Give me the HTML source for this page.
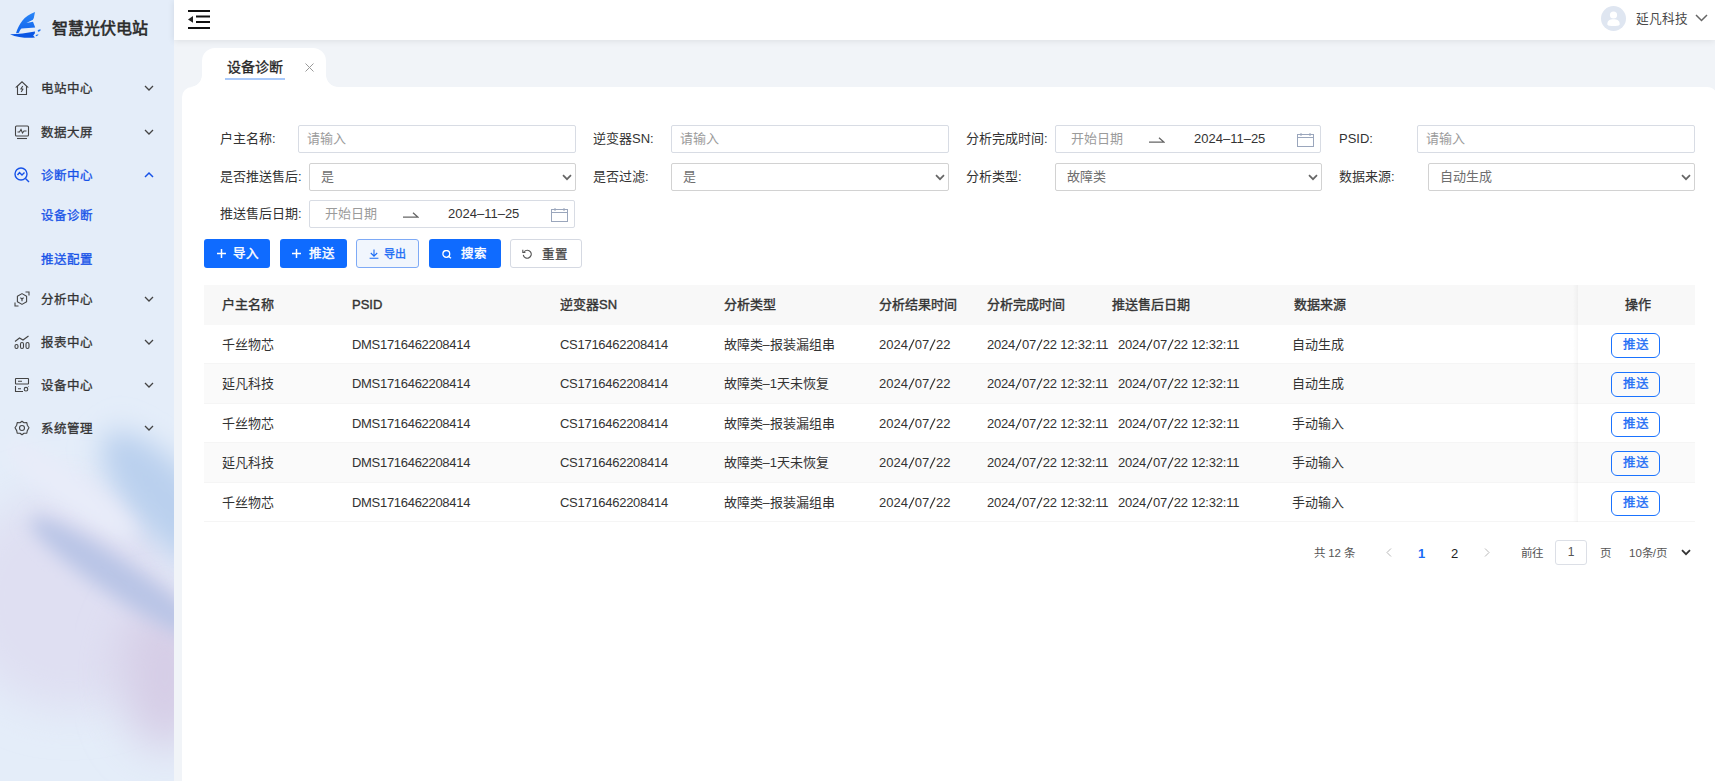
<!DOCTYPE html>
<html lang="zh-CN"><head><meta charset="utf-8">
<style>
*{box-sizing:border-box;margin:0;padding:0}
html,body{width:1715px;height:781px;overflow:hidden;background:#fff;font-family:"Liberation Sans",sans-serif;color:#333}
#side{position:absolute;left:0;top:0;width:174px;height:781px;overflow:hidden;background:#e4edf9}
#side .b{position:absolute;border-radius:50%}
.logo-t{position:absolute;left:52px;top:17.2px;font-size:16px;line-height:24px;font-weight:400;-webkit-text-stroke:0.6px currentColor;color:#2b2b2b;white-space:nowrap}
.mi{position:absolute;left:0;width:174px;height:20px;font-size:12.5px;font-weight:400;-webkit-text-stroke:0.3px currentColor;color:#333}
.mi svg.ic{position:absolute;left:14px;top:0.5px;width:16px;height:16px}
.mi .tx{position:absolute;left:41px;top:0;line-height:20px;white-space:nowrap}
.mi svg.ch{position:absolute;left:144px;top:4.5px;width:10px;height:8px}
.mi.blue{color:#1652e8}
#hdr{position:absolute;left:174px;top:0;width:1541px;height:40px;background:#fff;z-index:3;box-shadow:0 1px 7px rgba(0,0,0,0.09)}
#tabs{position:absolute;left:174px;top:40px;width:1541px;height:741px;background:#f1f4f8}
#card{position:absolute;left:182px;top:87px;width:1536px;height:694px;background:#fff;border-top-left-radius:10px;border-top-right-radius:11px}
.lbl{position:absolute;font-size:13px;color:#333;line-height:28px;white-space:nowrap}
.inp{position:absolute;height:28px;border:1px solid #d8dce4;border-radius:2px;background:#fff;font-size:13px;line-height:26px;color:#9b9b9b;white-space:nowrap}
.inp span{position:absolute;top:0}
.sel{border-color:#d2d2d2!important}
.sel svg{position:absolute;right:3px;top:10px;width:10px;height:7px}
.btn{position:absolute;top:239px;height:29px;border-radius:3px;font-size:12.5px;font-weight:400;-webkit-text-stroke:0.4px currentColor;line-height:29px;color:#fff;background:#0f6bff;white-space:nowrap}
.btn span,.btn svg{position:absolute}
.btn span{top:1.3px}
.th{position:absolute;top:285px;font-size:13px;font-weight:400;-webkit-text-stroke:0.38px currentColor;line-height:39px;color:#333;white-space:nowrap}
.row{position:absolute;left:204px;width:1491px;height:40px}
.td{position:absolute;font-size:13px;color:#333;line-height:40px;white-space:nowrap;top:0}
.op{position:absolute;left:1407px;top:8px;width:49px;height:25px;border:1px solid #1a73ff;border-radius:6px;color:#1a6cf5;font-size:12.5px;line-height:23px;text-align:center;-webkit-text-stroke:0.3px currentColor}
svg.sl{display:inline-block;vertical-align:-2px;margin:0 -0.1px}
.pg{position:absolute;top:543px;font-size:11.5px;line-height:20px;color:#555;white-space:nowrap}
</style></head><body>
<div id="side">
  <svg style="position:absolute;left:0;top:0" width="174" height="781" viewBox="0 0 174 781">
  <defs><filter id="bl" x="-50%" y="-50%" width="200%" height="200%"><feGaussianBlur stdDeviation="14"/></filter>
  <filter id="bl2" x="-50%" y="-50%" width="200%" height="200%"><feGaussianBlur stdDeviation="9"/></filter>
  <filter id="bl3" x="-50%" y="-50%" width="200%" height="200%"><feGaussianBlur stdDeviation="22"/></filter></defs>
  <ellipse cx="70" cy="600" rx="110" ry="110" fill="#dfdff2" filter="url(#bl3)"/>
  <ellipse cx="165" cy="675" rx="45" ry="75" fill="#d6cde6" filter="url(#bl3)"/>
  <ellipse cx="165" cy="500" rx="34" ry="88" transform="rotate(-42 165 500)" fill="#bad0ee" filter="url(#bl)"/>
  <ellipse cx="70" cy="490" rx="80" ry="18" transform="rotate(36 70 490)" fill="#e8ecf9" filter="url(#bl2)"/>
  <ellipse cx="118" cy="578" rx="105" ry="18" transform="rotate(34 118 578)" fill="#b9c5e6" filter="url(#bl2)"/>
</svg>
  <svg style="position:absolute;left:0;top:0" width="45" height="42" viewBox="0 0 45 42">
    <defs><linearGradient id="lg" x1="0" y1="0" x2="0" y2="1"><stop offset="0" stop-color="#2a86f7"/><stop offset="1" stop-color="#0f62ec"/></linearGradient></defs>
    <path d="M35 12 C29.5 14 25 17 22.5 20.5 C19.5 24.5 17.2 29 16 33.2 L19 32.8 C19.6 30.8 20.4 29.4 21.5 28.6 C26 27.9 31 27.6 35.2 27.4 L33 21.8 L26.4 22.9 L32.9 19.8 L33.8 18 C34.2 16 34.6 14 35 12 Z" fill="url(#lg)"/>
    <path d="M10 34.2 C18 34.2 27 33.3 35 31.6 L34.8 33.6 L33.2 35.4 L35 37.6 C27 38.2 17 37.6 10 34.2 Z" fill="#0a56e4"/>
    <path d="M37.6 30.8 C38.2 29.8 39.6 29.2 40.8 29.6 C40.8 30.6 39.6 31.6 38.2 31.8 Z M35.6 35.6 C36.2 34.8 37.4 34.4 38.6 34.6 C38.4 35.4 37.2 36 36 36.2 Z" fill="#1a6ff2"/>
  </svg>
  <div class="logo-t">智慧光伏电站</div>
  <div class="mi" style="top:79px">
    <svg class="ic" viewBox="0 0 16 16" fill="none" stroke="#444" stroke-width="1.1"><path d="M2.5 7 L8 1.8 L13.5 7 L12.5 7 L12.5 14.5 L3.5 14.5 L3.5 7 Z"/><path d="M8.8 6 L6.8 9 L9 9 L7.2 12" stroke-linejoin="round"/></svg>
    <span class="tx">电站中心</span>
    <svg class="ch" viewBox="0 0 10 8" fill="none" stroke="#444" stroke-width="1.3"><path d="M1 2 L5 6 L9 2"/></svg></div>
  <div class="mi" style="top:123px">
    <svg class="ic" viewBox="0 0 16 16" fill="none" stroke="#444" stroke-width="1.1"><rect x="1.5" y="2" width="13" height="10" rx="1"/><path d="M3.5 8 L5.5 8 L7 5.5 L8.5 9 L10 7 L12.5 7"/><path d="M3 14.5 L13 14.5"/></svg>
    <span class="tx">数据大屏</span>
    <svg class="ch" viewBox="0 0 10 8" fill="none" stroke="#444" stroke-width="1.3"><path d="M1 2 L5 6 L9 2"/></svg></div>
  <div class="mi blue" style="top:166px">
    <svg class="ic" viewBox="0 0 16 16" fill="none" stroke="#1652e8" stroke-width="1.4"><circle cx="7" cy="7" r="6"/><path d="M11.5 11.5 L15 15"/><path d="M3.5 8 L5.5 5.5 L8 8 L10.5 5.5"/></svg>
    <span class="tx">诊断中心</span>
    <svg class="ch" viewBox="0 0 10 8" fill="none" stroke="#1652e8" stroke-width="1.5"><path d="M1 6 L5 2 L9 6"/></svg></div>
  <div class="mi blue" style="top:206px"><span class="tx">设备诊断</span></div>
  <div class="mi blue" style="top:250px"><span class="tx">推送配置</span></div>
  <div class="mi" style="top:290px">
    <svg class="ic" viewBox="0 0 16 16" fill="none" stroke="#444" stroke-width="1.1"><path d="M8 2.6 L12.6 5.3 L12.6 10.7 L8 13.4 L3.4 10.7 L3.4 5.3 Z" stroke-linejoin="round"/><path d="M6.4 6.6 L8 8.2 L9.6 6.6 M8 8.2 L8 10.3"/><path d="M11.5 1 H15 V4.5 M1 11.5 V15 H4.5"/></svg>
    <span class="tx">分析中心</span>
    <svg class="ch" viewBox="0 0 10 8" fill="none" stroke="#444" stroke-width="1.3"><path d="M1 2 L5 6 L9 2"/></svg></div>
  <div class="mi" style="top:333px">
    <svg class="ic" viewBox="0 0 16 16" fill="none" stroke="#444" stroke-width="1.1"><rect x="1" y="10.5" width="3" height="4" rx="1.5"/><rect x="6.5" y="8.5" width="3" height="6" rx="1.5"/><rect x="12" y="8.5" width="3" height="6" rx="1.5"/><path d="M1 7.5 L5.5 4 L9 6 L14.5 2"/></svg>
    <span class="tx">报表中心</span>
    <svg class="ch" viewBox="0 0 10 8" fill="none" stroke="#444" stroke-width="1.3"><path d="M1 2 L5 6 L9 2"/></svg></div>
  <div class="mi" style="top:376px">
    <svg class="ic" viewBox="0 0 16 16" fill="none" stroke="#444" stroke-width="1.1"><rect x="1.5" y="1.5" width="13" height="5.5" rx="0.5"/><path d="M1.5 9 L1.5 14.5 L9 14.5 M14.5 9 L14.5 9.5"/><path d="M4 4.3 L8 4.3 M4 11.8 L7 11.8"/><circle cx="12" cy="12.2" r="1.8"/></svg>
    <span class="tx">设备中心</span>
    <svg class="ch" viewBox="0 0 10 8" fill="none" stroke="#444" stroke-width="1.3"><path d="M1 2 L5 6 L9 2"/></svg></div>
  <div class="mi" style="top:419px">
    <svg class="ic" viewBox="0 0 16 16" fill="none" stroke="#444" stroke-width="1.1"><path d="M8 1.2 L10 2.8 L12.8 2.6 L13.3 5.2 L15 7.8 L13.3 10.6 L12.8 13.2 L10 13.2 L8 14.8 L6 13.2 L3.2 13.2 L2.7 10.6 L1 7.8 L2.7 5.2 L3.2 2.6 L6 2.8 Z" stroke-linejoin="round"/><circle cx="8" cy="8" r="2.5"/></svg>
    <span class="tx">系统管理</span>
    <svg class="ch" viewBox="0 0 10 8" fill="none" stroke="#444" stroke-width="1.3"><path d="M1 2 L5 6 L9 2"/></svg></div>
</div>

<div id="hdr">
  <svg style="position:absolute;left:14px;top:10px" width="22" height="19" viewBox="0 0 22 19"><path d="M0 0 H22 V2 H0 Z M8 5.6 H22 V7.4 H8 Z M8 11.1 H22 V13 H8 Z M0 17 H22 V19 H0 Z" fill="#111"/><path d="M5 6 L0 9.4 L5 12.8 Z" fill="#222"/></svg>
  <svg style="position:absolute;left:1427px;top:6px" width="25" height="25" viewBox="0 0 25 25"><circle cx="12.5" cy="12.5" r="12.5" fill="#dfe6f1"/><circle cx="12.5" cy="9" r="3.6" fill="#fff"/><path d="M6.3 18.2 C6.3 14.5 9 13.3 12.5 13.3 C16 13.3 18.7 14.5 18.7 18.2 C18.7 19.6 16 20 12.5 20 C9 20 6.3 19.6 6.3 18.2 Z" fill="#fff"/></svg>
  <div style="position:absolute;left:1462px;top:8.7px;font-size:12.7px;line-height:20px;color:#4a4a4a;white-space:nowrap">延凡科技</div>
  <svg style="position:absolute;left:1521px;top:14px" width="13" height="8" viewBox="0 0 13 8" fill="none" stroke="#666" stroke-width="1.5"><path d="M1 1 L6.5 6.5 L12 1"/></svg>
</div>

<div id="tabs"></div>
<div id="card"></div>
<div id="tab" style="position:absolute;left:202px;top:48px;width:124px;height:40px;background:#fff;border-radius:13px 13px 0 0"></div>
<div style="position:absolute;left:190px;top:75px;width:12px;height:12px;background:radial-gradient(circle at 0 0, #f1f4f8 11.5px, #fff 12.2px)"></div>
<div style="position:absolute;left:326px;top:75px;width:12px;height:12px;background:radial-gradient(circle at 100% 0, #f1f4f8 11.5px, #fff 12.2px)"></div>
<div style="position:absolute;left:227px;top:56px;font-size:14px;line-height:22px;font-weight:400;-webkit-text-stroke:0.3px currentColor;color:#262626;white-space:nowrap">设备诊断</div>
<div style="position:absolute;left:225px;top:78px;width:60px;height:2px;background:#a9c9fa"></div>
<svg style="position:absolute;left:305px;top:63px" width="9" height="9" viewBox="0 0 9 9" stroke="#999" stroke-width="1"><path d="M0.5 0.5 L8.5 8.5 M8.5 0.5 L0.5 8.5"/></svg>
<div class="lbl" style="left:220px;top:125px">户主名称:</div>
<div class="inp" style="left:298px;top:125px;width:278px"><span style="left:8px">请输入</span></div>
<div class="lbl" style="left:593px;top:125px">逆变器SN:</div>
<div class="inp" style="left:671px;top:125px;width:278px"><span style="left:8px">请输入</span></div>
<div class="lbl" style="left:966px;top:125px">分析完成时间:</div>
<div class="inp" style="left:1055px;top:125px;width:266px"><span style="left:15px">开始日期</span><span style="left:93px;top:11px"><svg style="position:absolute" width="16" height="6" viewBox="0 0 16 6" fill="none" stroke="#666" stroke-width="1.3"><path d="M0 5.2 H15 L10 0.8"/></svg></span><span style="left:138px;color:#333">2024–11–25</span><svg style="position:absolute;right:6px;top:7px" width="17" height="14" viewBox="0 0 17 14" fill="none" stroke="#9aa6bc" stroke-width="1"><rect x="0.5" y="1.5" width="16" height="12"/><path d="M0.5 4.5 H16.5 M4 0 V3 M13 0 V3"/></svg></div>
<div class="lbl" style="left:1339px;top:125px">PSID:</div>
<div class="inp" style="left:1417px;top:125px;width:278px"><span style="left:8px">请输入</span></div>
<div class="lbl" style="left:220px;top:163px">是否推送售后:</div>
<div class="inp sel" style="left:309px;top:163px;width:267px;color:#6e6e6e"><span style="left:11px">是</span><svg viewBox="0 0 10 7" fill="none" stroke="#666" stroke-width="1.7"><path d="M1 1.2 L5 5.2 L9 1.2"/></svg></div>
<div class="lbl" style="left:593px;top:163px">是否过滤:</div>
<div class="inp sel" style="left:671px;top:163px;width:278px;color:#6e6e6e"><span style="left:11px">是</span><svg viewBox="0 0 10 7" fill="none" stroke="#666" stroke-width="1.7"><path d="M1 1.2 L5 5.2 L9 1.2"/></svg></div>
<div class="lbl" style="left:966px;top:163px">分析类型:</div>
<div class="inp sel" style="left:1055px;top:163px;width:267px;color:#6e6e6e"><span style="left:11px">故障类</span><svg viewBox="0 0 10 7" fill="none" stroke="#666" stroke-width="1.7"><path d="M1 1.2 L5 5.2 L9 1.2"/></svg></div>
<div class="lbl" style="left:1339px;top:163px">数据来源:</div>
<div class="inp sel" style="left:1428px;top:163px;width:267px;color:#6e6e6e"><span style="left:11px">自动生成</span><svg viewBox="0 0 10 7" fill="none" stroke="#666" stroke-width="1.7"><path d="M1 1.2 L5 5.2 L9 1.2"/></svg></div>
<div class="lbl" style="left:220px;top:200px">推送售后日期:</div>
<div class="inp" style="left:309px;top:200px;width:266px"><span style="left:15px">开始日期</span><span style="left:93px;top:11px"><svg style="position:absolute" width="16" height="6" viewBox="0 0 16 6" fill="none" stroke="#666" stroke-width="1.3"><path d="M0 5.2 H15 L10 0.8"/></svg></span><span style="left:138px;color:#333">2024–11–25</span><svg style="position:absolute;right:6px;top:7px" width="17" height="14" viewBox="0 0 17 14" fill="none" stroke="#9aa6bc" stroke-width="1"><rect x="0.5" y="1.5" width="16" height="12"/><path d="M0.5 4.5 H16.5 M4 0 V3 M13 0 V3"/></svg></div>
<div class="btn" style="left:204px;width:66px"><svg style="left:13px;top:10px" width="9" height="9" viewBox="0 0 9 9" stroke="#fff" stroke-width="1.5"><path d="M4.5 0 V9 M0 4.5 H9"/></svg><span style="left:29px">导入</span></div>
<div class="btn" style="left:280px;width:67px"><svg style="left:12px;top:10px" width="9" height="9" viewBox="0 0 9 9" stroke="#fff" stroke-width="1.5"><path d="M4.5 0 V9 M0 4.5 H9"/></svg><span style="left:29px">推送</span></div>
<div class="btn" style="left:356px;width:63px;background:#f1f6fd;border:1px solid #7eaaf6;color:#1a6cf5;font-size:11px;line-height:28px;-webkit-text-stroke:0.3px currentColor"><svg style="left:12px;top:9px" width="10" height="10" viewBox="0 0 10 10" fill="none" stroke="#1a6cf5" stroke-width="1.1"><path d="M5 0.5 V7 M1.8 4 L5 7.2 L8.2 4 M0.6 9.3 H9.4"/></svg><span style="left:27px;top:0">导出</span></div>
<div class="btn" style="left:429px;width:72px"><svg style="left:12.5px;top:10.5px" width="10" height="9" viewBox="0 0 10 9" fill="none" stroke="#fff" stroke-width="1.3"><circle cx="4.3" cy="3.9" r="3.4"/><path d="M6.8 6.5 L9 8.3"/></svg><span style="left:32px">搜索</span></div>
<div class="btn" style="left:510px;width:72px;background:#fff;border:1px solid #d5d9e2;color:#444;line-height:27px;-webkit-text-stroke:0.25px currentColor"><svg style="left:11px;top:9px" width="11" height="10" viewBox="0 0 11 10" fill="none" stroke="#555" stroke-width="1.1"><path d="M2.2 2.6 A4 4 0 1 1 1.3 5.8"/><path d="M0.8 0.8 V3.4 H3.4"/></svg><span style="left:31px;top:1.8px">重置</span></div>
<div style="position:absolute;left:204px;top:285px;width:1491px;height:40px;background:#f8f8f8"></div>
<div class="th" style="left:222px">户主名称</div>
<div class="th" style="left:352px">PSID</div>
<div class="th" style="left:560px">逆变器SN</div>
<div class="th" style="left:723.5px">分析类型</div>
<div class="th" style="left:879px">分析结果时间</div>
<div class="th" style="left:987px">分析完成时间</div>
<div class="th" style="left:1112px">推送售后日期</div>
<div class="th" style="left:1293.5px">数据来源</div>
<div class="th" style="left:1625px">操作</div>
<div class="row" style="top:325px;height:39.4px;background:#fff;border-bottom:1px solid #f5f5f5"><div class="td" style="left:18px">千丝物芯</div><div class="td" style="left:148px;letter-spacing:-0.3px">DMS1716462208414</div><div class="td" style="left:356px;letter-spacing:-0.28px">CS1716462208414</div><div class="td" style="left:519.5px">故障类–报装漏组串</div><div class="td" style="left:675px">2024<svg class="sl" width="7" height="12" viewBox="0 0 7 12"><path d="M0.9 11.6 L6.1 0.4" stroke="#333" stroke-width="1.2"/></svg>07<svg class="sl" width="7" height="12" viewBox="0 0 7 12"><path d="M0.9 11.6 L6.1 0.4" stroke="#333" stroke-width="1.2"/></svg>22</div><div class="td" style="left:783px;letter-spacing:-0.2px">2024<svg class="sl" width="7" height="12" viewBox="0 0 7 12"><path d="M0.9 11.6 L6.1 0.4" stroke="#333" stroke-width="1.2"/></svg>07<svg class="sl" width="7" height="12" viewBox="0 0 7 12"><path d="M0.9 11.6 L6.1 0.4" stroke="#333" stroke-width="1.2"/></svg>22 12:32:11</div><div class="td" style="left:914px;letter-spacing:-0.2px">2024<svg class="sl" width="7" height="12" viewBox="0 0 7 12"><path d="M0.9 11.6 L6.1 0.4" stroke="#333" stroke-width="1.2"/></svg>07<svg class="sl" width="7" height="12" viewBox="0 0 7 12"><path d="M0.9 11.6 L6.1 0.4" stroke="#333" stroke-width="1.2"/></svg>22 12:32:11</div><div class="td" style="left:1087.5px">自动生成</div><div class="op">推送</div></div>
<div class="row" style="top:364.4px;height:39.4px;background:#fafafa;border-bottom:1px solid #f5f5f5"><div class="td" style="left:18px">延凡科技</div><div class="td" style="left:148px;letter-spacing:-0.3px">DMS1716462208414</div><div class="td" style="left:356px;letter-spacing:-0.28px">CS1716462208414</div><div class="td" style="left:519.5px">故障类–1天未恢复</div><div class="td" style="left:675px">2024<svg class="sl" width="7" height="12" viewBox="0 0 7 12"><path d="M0.9 11.6 L6.1 0.4" stroke="#333" stroke-width="1.2"/></svg>07<svg class="sl" width="7" height="12" viewBox="0 0 7 12"><path d="M0.9 11.6 L6.1 0.4" stroke="#333" stroke-width="1.2"/></svg>22</div><div class="td" style="left:783px;letter-spacing:-0.2px">2024<svg class="sl" width="7" height="12" viewBox="0 0 7 12"><path d="M0.9 11.6 L6.1 0.4" stroke="#333" stroke-width="1.2"/></svg>07<svg class="sl" width="7" height="12" viewBox="0 0 7 12"><path d="M0.9 11.6 L6.1 0.4" stroke="#333" stroke-width="1.2"/></svg>22 12:32:11</div><div class="td" style="left:914px;letter-spacing:-0.2px">2024<svg class="sl" width="7" height="12" viewBox="0 0 7 12"><path d="M0.9 11.6 L6.1 0.4" stroke="#333" stroke-width="1.2"/></svg>07<svg class="sl" width="7" height="12" viewBox="0 0 7 12"><path d="M0.9 11.6 L6.1 0.4" stroke="#333" stroke-width="1.2"/></svg>22 12:32:11</div><div class="td" style="left:1087.5px">自动生成</div><div class="op">推送</div></div>
<div class="row" style="top:403.8px;height:39.4px;background:#fff;border-bottom:1px solid #f5f5f5"><div class="td" style="left:18px">千丝物芯</div><div class="td" style="left:148px;letter-spacing:-0.3px">DMS1716462208414</div><div class="td" style="left:356px;letter-spacing:-0.28px">CS1716462208414</div><div class="td" style="left:519.5px">故障类–报装漏组串</div><div class="td" style="left:675px">2024<svg class="sl" width="7" height="12" viewBox="0 0 7 12"><path d="M0.9 11.6 L6.1 0.4" stroke="#333" stroke-width="1.2"/></svg>07<svg class="sl" width="7" height="12" viewBox="0 0 7 12"><path d="M0.9 11.6 L6.1 0.4" stroke="#333" stroke-width="1.2"/></svg>22</div><div class="td" style="left:783px;letter-spacing:-0.2px">2024<svg class="sl" width="7" height="12" viewBox="0 0 7 12"><path d="M0.9 11.6 L6.1 0.4" stroke="#333" stroke-width="1.2"/></svg>07<svg class="sl" width="7" height="12" viewBox="0 0 7 12"><path d="M0.9 11.6 L6.1 0.4" stroke="#333" stroke-width="1.2"/></svg>22 12:32:11</div><div class="td" style="left:914px;letter-spacing:-0.2px">2024<svg class="sl" width="7" height="12" viewBox="0 0 7 12"><path d="M0.9 11.6 L6.1 0.4" stroke="#333" stroke-width="1.2"/></svg>07<svg class="sl" width="7" height="12" viewBox="0 0 7 12"><path d="M0.9 11.6 L6.1 0.4" stroke="#333" stroke-width="1.2"/></svg>22 12:32:11</div><div class="td" style="left:1087.5px">手动输入</div><div class="op">推送</div></div>
<div class="row" style="top:443.2px;height:39.4px;background:#fafafa;border-bottom:1px solid #f5f5f5"><div class="td" style="left:18px">延凡科技</div><div class="td" style="left:148px;letter-spacing:-0.3px">DMS1716462208414</div><div class="td" style="left:356px;letter-spacing:-0.28px">CS1716462208414</div><div class="td" style="left:519.5px">故障类–1天未恢复</div><div class="td" style="left:675px">2024<svg class="sl" width="7" height="12" viewBox="0 0 7 12"><path d="M0.9 11.6 L6.1 0.4" stroke="#333" stroke-width="1.2"/></svg>07<svg class="sl" width="7" height="12" viewBox="0 0 7 12"><path d="M0.9 11.6 L6.1 0.4" stroke="#333" stroke-width="1.2"/></svg>22</div><div class="td" style="left:783px;letter-spacing:-0.2px">2024<svg class="sl" width="7" height="12" viewBox="0 0 7 12"><path d="M0.9 11.6 L6.1 0.4" stroke="#333" stroke-width="1.2"/></svg>07<svg class="sl" width="7" height="12" viewBox="0 0 7 12"><path d="M0.9 11.6 L6.1 0.4" stroke="#333" stroke-width="1.2"/></svg>22 12:32:11</div><div class="td" style="left:914px;letter-spacing:-0.2px">2024<svg class="sl" width="7" height="12" viewBox="0 0 7 12"><path d="M0.9 11.6 L6.1 0.4" stroke="#333" stroke-width="1.2"/></svg>07<svg class="sl" width="7" height="12" viewBox="0 0 7 12"><path d="M0.9 11.6 L6.1 0.4" stroke="#333" stroke-width="1.2"/></svg>22 12:32:11</div><div class="td" style="left:1087.5px">手动输入</div><div class="op">推送</div></div>
<div class="row" style="top:482.6px;height:39.4px;background:#fff;border-bottom:1px solid #f5f5f5"><div class="td" style="left:18px">千丝物芯</div><div class="td" style="left:148px;letter-spacing:-0.3px">DMS1716462208414</div><div class="td" style="left:356px;letter-spacing:-0.28px">CS1716462208414</div><div class="td" style="left:519.5px">故障类–报装漏组串</div><div class="td" style="left:675px">2024<svg class="sl" width="7" height="12" viewBox="0 0 7 12"><path d="M0.9 11.6 L6.1 0.4" stroke="#333" stroke-width="1.2"/></svg>07<svg class="sl" width="7" height="12" viewBox="0 0 7 12"><path d="M0.9 11.6 L6.1 0.4" stroke="#333" stroke-width="1.2"/></svg>22</div><div class="td" style="left:783px;letter-spacing:-0.2px">2024<svg class="sl" width="7" height="12" viewBox="0 0 7 12"><path d="M0.9 11.6 L6.1 0.4" stroke="#333" stroke-width="1.2"/></svg>07<svg class="sl" width="7" height="12" viewBox="0 0 7 12"><path d="M0.9 11.6 L6.1 0.4" stroke="#333" stroke-width="1.2"/></svg>22 12:32:11</div><div class="td" style="left:914px;letter-spacing:-0.2px">2024<svg class="sl" width="7" height="12" viewBox="0 0 7 12"><path d="M0.9 11.6 L6.1 0.4" stroke="#333" stroke-width="1.2"/></svg>07<svg class="sl" width="7" height="12" viewBox="0 0 7 12"><path d="M0.9 11.6 L6.1 0.4" stroke="#333" stroke-width="1.2"/></svg>22 12:32:11</div><div class="td" style="left:1087.5px">手动输入</div><div class="op">推送</div></div>
<div style="position:absolute;left:1573px;top:285px;width:5px;height:237px;background:linear-gradient(90deg,rgba(0,0,0,0),rgba(0,0,0,0.035))"></div>
<div class="pg" style="left:1314px">共 12 条</div>
<svg style="position:absolute;left:1386px;top:548px" width="6" height="9" viewBox="0 0 6 9" fill="none" stroke="#b8b8b8" stroke-width="1"><path d="M5 0.5 L1 4.5 L5 8.5"/></svg>
<div class="pg" style="left:1418px;color:#1a6cf5;font-weight:700;font-size:13px;top:543.5px">1</div>
<div class="pg" style="left:1451px;color:#222;font-size:13px;top:543.5px">2</div>
<svg style="position:absolute;left:1484px;top:548px" width="6" height="9" viewBox="0 0 6 9" fill="none" stroke="#b8b8b8" stroke-width="1"><path d="M1 0.5 L5 4.5 L1 8.5"/></svg>
<div class="pg" style="left:1521px">前往</div>
<div style="position:absolute;left:1555px;top:540px;width:32px;height:25px;border:1px solid #dcdfe6;border-radius:3px;font-size:12px;line-height:23px;text-align:center;color:#555">1</div>
<div class="pg" style="left:1600px">页</div>
<div class="pg" style="left:1629px">10条/页</div>
<svg style="position:absolute;left:1681px;top:549px" width="10" height="7" viewBox="0 0 10 7" fill="none" stroke="#333" stroke-width="1.8"><path d="M1 1.2 L5 5.2 L9 1.2"/></svg>
</body></html>
